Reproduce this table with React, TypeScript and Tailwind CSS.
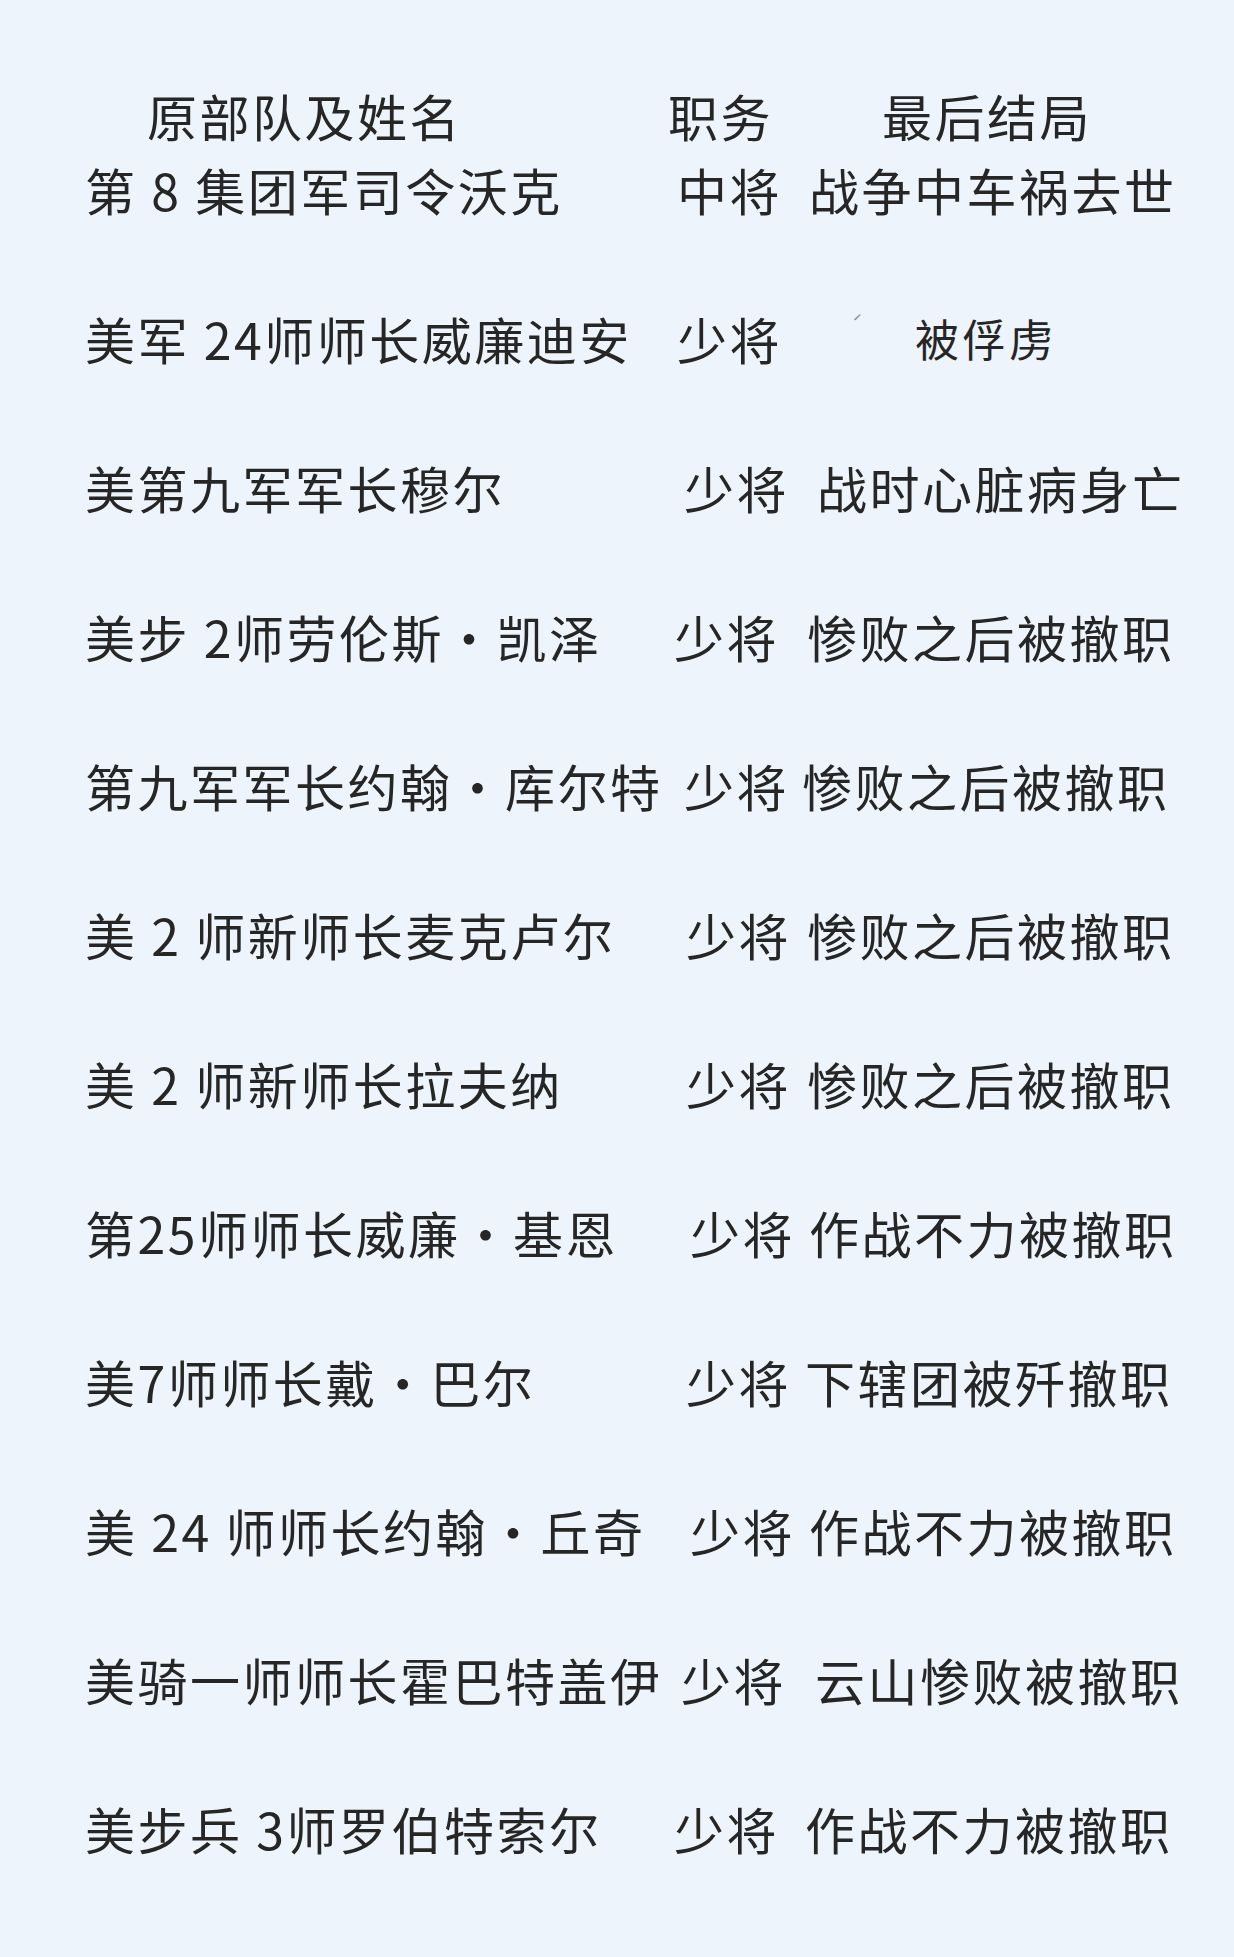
const rows = [
  { name: "第 8 集团军司令沃克", rank: "中将", fate: "战争中车祸去世", nameW: "w-[592px]", rankW: "w-[132px]" },
  { name: "美军 24师师长威廉迪安", rank: "少将", fate: "被俘虏", nameW: "w-[592px]", rankW: "w-[238px]", small: true },
  { name: "美第九军军长穆尔", rank: "少将", fate: "战时心脏病身亡", nameW: "w-[599px]", rankW: "w-[133px]" },
  { name: "美步 2师劳伦斯·凯泽", rank: "少将", fate: "惨败之后被撤职", nameW: "w-[589px]", rankW: "w-[133px]" },
  { name: "第九军军长约翰·库尔特", rank: "少将", fate: "惨败之后被撤职", nameW: "w-[599px]", rankW: "w-[118px]" },
  { name: "美 2 师新师长麦克卢尔", rank: "少将", fate: "惨败之后被撤职", nameW: "w-[601px]", rankW: "w-[121px]" },
  { name: "美 2 师新师长拉夫纳", rank: "少将", fate: "惨败之后被撤职", nameW: "w-[601px]", rankW: "w-[121px]" },
  { name: "第25师师长威廉·基恩", rank: "少将", fate: "作战不力被撤职", nameW: "w-[605px]", rankW: "w-[119px]" },
  { name: "美7师师长戴·巴尔", rank: "少将", fate: "下辖团被歼撤职", nameW: "w-[601px]", rankW: "w-[119px]" },
  { name: "美 24 师师长约翰·丘奇", rank: "少将", fate: "作战不力被撤职", nameW: "w-[605px]", rankW: "w-[119px]" },
  { name: "美骑一师师长霍巴特盖伊", rank: "少将", fate: "云山惨败被撤职", nameW: "w-[596px]", rankW: "w-[134px]" },
  { name: "美步兵 3师罗伯特索尔", rank: "少将", fate: "作战不力被撤职", nameW: "w-[589px]", rankW: "w-[131px]" },
]

export default function App() {
  return (
    <div className="min-h-[1957px] w-full bg-[#eef4fb] pt-[85px] text-[#262626] font-['Noto_Sans_CJK_SC','Noto_Sans',sans-serif] text-[50px] tracking-[2.5px]">
      <div className="flex flex-col gap-[89px]">
        <div className="flex flex-col gap-[14px]">
          <div className="flex h-[60px] items-center pl-[85px] leading-none whitespace-nowrap">
            <span className="w-[583px] pl-[62px]">原部队及姓名</span>
            <span className="w-[214px]">职务</span>
            <span>最后结局</span>
          </div>
          <Row {...rows[0]} />
        </div>
        {rows.slice(1).map((r, i) => (
          <Row key={i} {...r} />
        ))}
      </div>
    </div>
  )
}

function Row({ name, rank, fate, nameW, rankW, small }: { name: string; rank: string; fate: string; nameW: string; rankW: string; small?: boolean }) {
  return (
    <div className="flex h-[60px] items-center pl-[85px] leading-none whitespace-nowrap">
      <span className={nameW}>{name}</span>
      <span className={rankW}>
        {rank}
        {small && <span className="ml-[70px] align-top text-[18px] text-[#8a9099]">ˊ</span>}
      </span>
      {small ? <span className="text-[44px] tracking-[3px]">{fate}</span> : <span>{fate}</span>}
    </div>
  )
}
